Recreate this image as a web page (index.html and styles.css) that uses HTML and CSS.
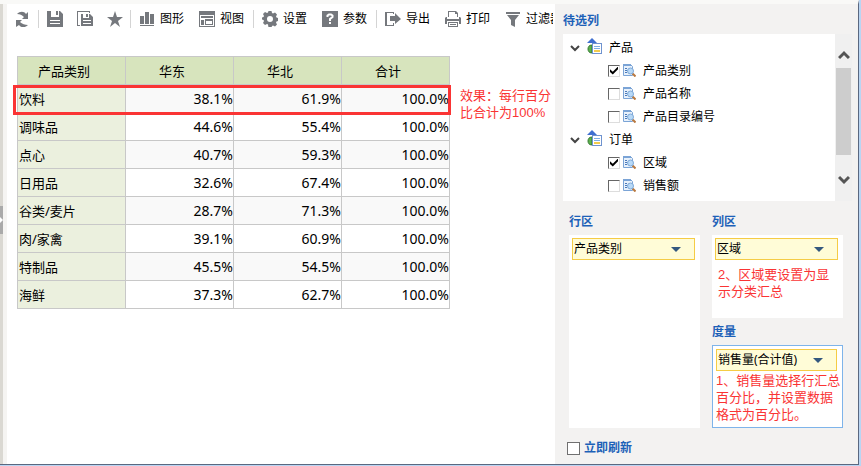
FILE: index.html
```html
<!DOCTYPE html>
<html lang="zh-CN">
<head>
    <meta charset="UTF-8">
    <meta name="viewport" content="width=device-width, initial-scale=1.0">
    <title>产品类别</title>
    <link rel="stylesheet" href="styles.css">
</head>
<body>
    <!-- shared icons -->
    <svg class="defs" width="0" height="0">
        <symbol id="i-entity" viewBox="0 0 16 16">
            <path d="M0 5L5 0l5 5z" fill="#3f6fd0"/>
            <path d="M5 7C2 7 1 9 1 11s1 4 4 4z" fill="#5cb04c" stroke="#357a33"/>
            <rect x="5.5" y="5.5" width="9" height="10" fill="#fff" stroke="#6f93cf"/>
            <path d="M7 8.5h6M7 10.5h6" stroke="#7fb0e6"/>
            <path d="M7 13h6" stroke="#f3cc4e" stroke-width="2"/>
        </symbol>
        <symbol id="i-field" viewBox="0 0 13 13">
            <path d="M.5 .5h7l2 2v9h-9z" fill="#e8f1fb" stroke="#7ba4d6"/>
            <path d="M0 1h8" stroke="#7ba4d6" stroke-width="2"/>
            <path d="M2 4.500h2M2 6.500h2M2 8.500h2" stroke="#4a78b8"/>
            <path d="M9.500 9.500l3 3" stroke="#b9783f" stroke-width="2"/>
            <circle cx="7.500" cy="7" r="3" fill="#b8d9f7" stroke="#7fa9d8"/>
        </symbol>
        <symbol id="i-open" viewBox="0 0 10 10">
            <path d="M1 3l4 4 4-4" fill="none" stroke="#444" stroke-width="2"/>
        </symbol>
    </svg>

    <div class="window">
        <div class="splitter">
            <button class="splitter-handle" aria-label="展开"></button>
        </div>

        <main class="report">
            <div class="toolbar">
                <div class="group">
                    <button class="tool" aria-label="刷新">
                        <svg viewBox="0 0 16 16"><path d="M2 3c3-3 7-3 9 0l2-2v7H7l2-2C7 4 5 3 2 3zM13 14c-3 3-7 3-9 0l-3 2V9h6l-2 2c2 2 5 3 8 3z"/></svg>
                    </button>
                </div>
                <div class="group">
                    <button class="tool" aria-label="保存">
                        <svg viewBox="0 0 16 16"><path d="M0 0h4v6h8V0h1l3 3v13H0z"/><path d="M9 0h2v4H9z"/><path d="M3 9h10v1H3zM3 12h10v1H3z" fill="#fff"/></svg>
                    </button>
                    <button class="tool" aria-label="另存为">
                        <svg viewBox="0 0 16 16"><path d="M0 0h13v2h-1V1H1v13h2v1H0z"/><path d="M4 3h2v4h6V3h1l3 3v9H4z"/><path d="M9 3h2v3H9z"/><path d="M6 9h8v1H6zM6 12h8v1H6z" fill="#fff"/></svg>
                    </button>
                    <button class="tool" aria-label="收藏">
                        <svg viewBox="0 0 16 16"><path d="M8 0l2 6h6l-5 4 2 6-5-4-5 4 2-6-5-4h6z"/></svg>
                    </button>
                </div>
                <div class="group labelled">
                    <button class="tool">
                        <svg viewBox="0 0 16 16"><path d="M1 5h4v8H1zM6 1h4v12H6zM11 3h4v10h-4zM1 14h14v1H1z"/></svg>图形
                    </button>
                    <button class="tool">
                        <svg viewBox="0 0 16 16"><path d="M0 0h16v16H0z"/><path d="M1 4h14v11H1z" fill="#fff"/><path d="M2 5h12v2H2zM2 9h3v5H2zM6 8h8v6H6z"/><path d="M7 10h6v3H7z" fill="#fff"/></svg>视图
                    </button>
                </div>
                <div class="group labelled">
                    <button class="tool">
                        <svg viewBox="0 0 16 16"><path fill-rule="evenodd" d="M6.500 0h3l.5 2 1 .5 2-1 2 2-1 2 .5 1 1.500.5v3l-1.500.5-.5 1 1 2-2 2-2-1-1 .5-.5 1.500h-3L6 13.500 5 13l-2 1-2-2 1-2-.5-1L0 8.500v-2L1.500 6 2 5 1 3l2-2 2 1 1-.5zM8 5a3 3 0 1 0 0 6 3 3 0 0 0 0-6z"/></svg>设置
                    </button>
                    <button class="tool">
                        <svg viewBox="0 0 16 16"><path d="M0 0h16v16H0z"/><path d="M5.500 6V4.500L7 3.500h2l1.500 1V6L8 8v2" fill="none" stroke="#fff" stroke-width="2"/><path d="M7 11h2v2H7z" fill="#fff"/></svg>参数
                    </button>
                </div>
                <div class="group labelled">
                    <button class="tool">
                        <svg viewBox="0 0 16 16"><path d="M0 1h9v2H8V2H2v12h6v-2h1v3H0z"/><path d="M5 5h5V2l6 6-6 5v-3H5z"/></svg>导出
                    </button>
                    <button class="tool">
                        <svg viewBox="0 0 16 16"><path d="M3 0h8l2 2v4h-1V3h-2V1H4v5H3z"/><path d="M1 6h1v2h12V6h1l1 1v6h-2v-3H2v3H0V7z"/><path d="M3 11h10v5H3zm1 1v3h8v-3z" fill-rule="evenodd"/><path d="M5 13h6v1H5z"/></svg>打印
                    </button>
                    <button class="tool">
                        <svg viewBox="0 0 16 16"><path d="M1 1h14v2H1zM2 4h12l-4 5v7l-4-2V9z"/></svg>过滤器
                    </button>
                </div>
            </div>

            <div class="content">
                <div class="table-wrap">
                    <table class="pivot">
                        <thead>
                            <tr><th>产品类别</th><th>华东</th><th>华北</th><th>合计</th></tr>
                        </thead>
                        <tbody>
                            <tr><th>饮料</th><td>38.1%</td><td>61.9%</td><td>100.0%</td></tr>
                            <tr><th>调味品</th><td>44.6%</td><td>55.4%</td><td>100.0%</td></tr>
                            <tr><th>点心</th><td>40.7%</td><td>59.3%</td><td>100.0%</td></tr>
                            <tr><th>日用品</th><td>32.6%</td><td>67.4%</td><td>100.0%</td></tr>
                            <tr><th>谷类/麦片</th><td>28.7%</td><td>71.3%</td><td>100.0%</td></tr>
                            <tr><th>肉/家禽</th><td>39.1%</td><td>60.9%</td><td>100.0%</td></tr>
                            <tr><th>特制品</th><td>45.5%</td><td>54.5%</td><td>100.0%</td></tr>
                            <tr><th>海鲜</th><td>37.3%</td><td>62.7%</td><td>100.0%</td></tr>
                        </tbody>
                    </table>
                    <div class="row-mark"></div>
                </div>
                <p class="note">效果：每行百分<br>比合计为100%</p>
            </div>
        </main>

        <aside class="panel">
            <h2 class="title">待选列</h2>
            <div class="tree">
                <ul class="nodes">
                    <li class="node"><svg class="open"><use href="#i-open"/></svg><svg class="entity"><use href="#i-entity"/></svg>产品</li>
                    <li class="leaf"><label><input type="checkbox" checked><svg class="field"><use href="#i-field"/></svg>产品类别</label></li>
                    <li class="leaf"><label><input type="checkbox"><svg class="field"><use href="#i-field"/></svg>产品名称</label></li>
                    <li class="leaf"><label><input type="checkbox"><svg class="field"><use href="#i-field"/></svg>产品目录编号</label></li>
                    <li class="node"><svg class="open"><use href="#i-open"/></svg><svg class="entity"><use href="#i-entity"/></svg>订单</li>
                    <li class="leaf"><label><input type="checkbox" checked><svg class="field"><use href="#i-field"/></svg>区域</label></li>
                    <li class="leaf"><label><input type="checkbox"><svg class="field"><use href="#i-field"/></svg>销售额</label></li>
                </ul>
                <div class="scrollbar">
                    <svg viewBox="0 0 12 10"><path d="M1 8l5-5 5 5" fill="none" stroke="#555" stroke-width="3"/></svg>
                    <div class="thumb"></div>
                    <svg viewBox="0 0 12 10"><path d="M1 2l5 5 5-5" fill="none" stroke="#555" stroke-width="3"/></svg>
                </div>
            </div>

            <div class="zones">
                <section class="zone">
                    <h2 class="title"><label for="rows">行区</label></h2>
                    <div class="drop">
                        <div class="chip"><select id="rows"><option>产品类别</option></select></div>
                    </div>
                </section>
                <div class="zone-stack">
                    <section class="zone">
                        <h2 class="title"><label for="cols">列区</label></h2>
                        <div class="drop">
                            <div class="chip"><select id="cols"><option>区域</option></select></div>
                            <p class="note">2、区域要设置为显<br>示分类汇总</p>
                        </div>
                    </section>
                    <section class="zone">
                        <h2 class="title"><label for="measure">度量</label></h2>
                        <div class="drop active">
                            <div class="chip"><select id="measure"><option>销售量(合计值)</option></select></div>
                            <p class="note">1、销售量选择行汇总<br>百分比，并设置数据<br>格式为百分比。</p>
                        </div>
                    </section>
                </div>
            </div>

            <label class="refresh"><input type="checkbox">立即刷新</label>
        </aside>
    </div>
</body>
</html>
```

FILE: styles.css
```css
* {
    box-sizing: border-box;
}
body {
    margin: 0;
    padding: 0 2px 2px 0;
    background: #b9d5f3;
    color: #000;
    font-family: "Noto Sans", "Noto Sans CJK SC", sans-serif;
    font-size: 12px;
    line-height: 16px;
}
h2, p, ul {
    margin: 0;
    padding: 0;
}
.defs {
    position: absolute;
}
.window {
    display: flex;
    min-height: calc(100vh - 2px);
    background: #fff;
    border-top: 4px solid #f9f9f7;
    border-right: 1px solid #5a6880;
    border-bottom: 1px solid #5a6880;
}

/* left splitter */
.splitter {
    display: flex;
    flex: none;
    width: 7px;
    padding-top: 202px;
    background: #f5f4f2;
    border-left: 3px solid #dad8d2;
}
.splitter-handle {
    flex: none;
    width: 3px;
    height: 28px;
    margin-left: -3px;
    padding: 0;
    border: 0;
    background: #aaa;
}
.splitter-handle::before {
    content: "";
    display: block;
    width: 3px;
    height: 6px;
    background: #fff;
    clip-path: polygon(0 0, 100% 50%, 0 100%);
}

/* toolbar */
.report {
    flex: 1;
    min-width: 0;
}
.toolbar {
    display: flex;
    height: 30px;
    margin-right: 2px;
    align-items: center;
    overflow: hidden;
}
.group {
    display: flex;
    flex: none;
    gap: 14px;
    padding: 0 7px 0 8px;
    height: 18px;
    align-items: center;
    border-left: 1px solid #d4d4d4;
}
.group:first-child {
    border-left: 0;
}
.labelled {
    gap: 15px;
    padding-right: 9px;
}
.tool {
    display: flex;
    align-items: center;
    gap: 5px;
    padding: 0;
    border: 0;
    background: none;
    color: #000;
    font: inherit;
    white-space: nowrap;
}
.tool svg {
    width: 16px;
    height: 16px;
    fill: #75787d;
}

/* result table */
.content {
    display: flex;
    gap: 10px;
    padding: 22px 0 0 10px;
}
.table-wrap {
    position: relative;
    flex: none;
}
.pivot {
    table-layout: fixed;
    width: 433px;
    border-collapse: collapse;
    font-size: 13px;
}
.pivot th, .pivot td {
    height: 28px;
    padding: 0 1px;
    border: 1px solid #c8c8c8;
    font-weight: normal;
}
.pivot thead th {
    background: #d7e4bd;
    padding-right: 16px;
}
.pivot tbody th {
    background: #ebf0de;
    text-align: left;
}
.pivot td {
    padding-right: 0;
    font-size: 14px;
    text-align: right;
}
.pivot tbody tr:nth-child(odd) td {
    background: #f9f9f9;
}
.row-mark {
    position: absolute;
    left: -4px;
    right: -1px;
    top: 29px;
    height: 30px;
    border: 3px solid #fa3434;
}
.note {
    color: #fa3434;
    font-family: "Liberation Sans", "Noto Sans CJK SC", sans-serif;
    font-size: 13px;
    line-height: 17px;
    white-space: nowrap;
}
.content .note {
    padding-top: 31px;
}

/* field panel */
.panel {
    flex: none;
    width: 303px;
    padding: 8px 6px 8px 8px;
    background: #f3f2f1;
}
.title {
    color: #1c61b8;
    font-size: 12px;
    font-weight: bold;
    line-height: 18px;
}
.tree {
    display: flex;
    margin: 4px 0 12px;
    background: #fff;
}
.nodes {
    flex: 1;
    padding: 2px 0 4px;
    list-style: none;
}
.node, .leaf label {
    display: flex;
    align-items: center;
    height: 23px;
}
.node {
    padding-left: 7px;
}
.leaf {
    padding-left: 45px;
}
.open {
    width: 10px;
    height: 10px;
    margin-right: 7px;
}
.entity {
    width: 16px;
    height: 16px;
    margin: 0 6px 4px 0;
}
.field {
    width: 13px;
    height: 13px;
    margin: 0 7px 0 3px;
}
input[type="checkbox"] {
    appearance: none;
    display: flex;
    align-items: center;
    justify-content: center;
    width: 12px;
    height: 12px;
    margin: 0;
    background: #fff;
    border: 1px solid #ddd;
    border-top-color: #666;
    border-left-color: #666;
}
input[type="checkbox"]:checked::before {
    content: "";
    width: 8px;
    height: 8px;
    background: #000;
    clip-path: polygon(0 35%, 35% 65%, 100% 0, 100% 35%, 35% 100%, 0 70%);
}
.scrollbar {
    display: flex;
    flex-direction: column;
    align-items: center;
    width: 17px;
    padding: 16px 1px;
    background: #f0f0f0;
}
.scrollbar svg {
    width: 12px;
    height: 10px;
}
.thumb {
    width: 15px;
    height: 87px;
    margin: 8px 0 auto;
    background: #cdcdcd;
}

/* drop zones */
.zones {
    display: grid;
    grid-template-columns: minmax(0, 1fr) minmax(0, 1fr);
    gap: 12px;
    padding: 0 9px 0 6px;
}
.zone, .zone-stack {
    display: flex;
    flex-direction: column;
}
.zone-stack {
    gap: 5px;
}
.zone .title {
    margin-bottom: 4px;
}
.drop {
    flex: 1;
    min-height: 83px;
    padding: 3px 5px 3px 3px;
    background: #fff;
}
.drop.active {
    border: 1px solid #7eb4ea;
}
.chip {
    position: relative;
}
.chip select {
    appearance: none;
    display: block;
    width: 100%;
    height: 22px;
    padding: 0 1px;
    border: 1px solid #f5cc45;
    border-radius: 0;
    background: #fffcd7;
    color: #000;
    font: inherit;
}
.chip::after {
    content: "";
    position: absolute;
    top: 9px;
    right: 14px;
    border: 5px solid transparent;
    border-top-color: #34587f;
    border-bottom: 0;
}
.drop .note {
    padding: 6px 0 0 3px;
}
.drop.active .note {
    padding: 1px 0 0;
}
.refresh {
    display: flex;
    align-items: center;
    gap: 4px;
    margin: 12px 0 0 4px;
    color: #1c61b8;
    font-weight: bold;
}
.refresh input[type="checkbox"] {
    width: 13px;
    height: 13px;
    border-color: #707070;
}
```
